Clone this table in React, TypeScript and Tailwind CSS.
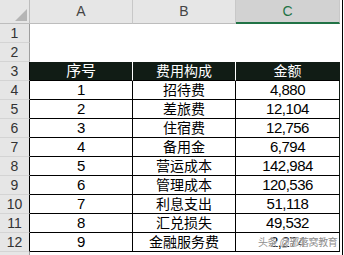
const rows: { n: number; a?: string; b?: string; c?: string; head?: boolean; purple?: boolean }[] = [
  { n: 1 },
  { n: 2 },
  { n: 3, a: '序号', b: '费用构成', c: '金额', head: true },
  { n: 4, a: '1', b: '招待费', c: '4,880' },
  { n: 5, a: '2', b: '差旅费', c: '12,104' },
  { n: 6, a: '3', b: '住宿费', c: '12,756' },
  { n: 7, a: '4', b: '备用金', c: '6,794', purple: true },
  { n: 8, a: '5', b: '营运成本', c: '142,984' },
  { n: 9, a: '6', b: '管理成本', c: '120,536' },
  { n: 10, a: '7', b: '利息支出', c: '51,118' },
  { n: 11, a: '8', b: '汇兑损失', c: '49,532' },
  { n: 12, a: '9', b: '金融服务费', c: '2,274' },
]

const font = { fontFamily: '"Liberation Sans", "Noto Sans CJK SC", sans-serif' }

function Row({ r }: { r: (typeof rows)[number] }) {
  const table = r.n >= 3
  const cell = r.head
    ? 'bg-[#111c15] text-white border-b border-b-black'
    : table
      ? 'bg-white text-black border-b border-b-black'
      : 'bg-white'
  return (
    <div className="flex h-[19px]">
      <div
        className={`w-[30px] shrink-0 flex items-center justify-center bg-[#e6e6e6] text-[14px] text-[#333] border-b border-b-[#d4d4d4] border-r ${
          table ? 'border-r-black' : 'border-r-[#9e9e9e]'
        }`}
      >
        {r.n}
      </div>
      <div
        className={`w-[103px] shrink-0 flex items-center justify-center text-[15px] tracking-[-0.3px] ${cell} ${
          r.head ? 'border-r border-r-white' : table ? 'border-r border-r-black' : ''
        } ${r.purple ? 'text-[#4e3391]' : ''}`}
      >
        {r.a}
      </div>
      <div
        className={`w-[103px] shrink-0 flex items-center justify-center text-[14px] ${cell} ${
          r.head ? 'border-r border-r-white' : table ? 'border-r border-r-black' : ''
        }`}
      >
        {r.b}
      </div>
      <div
        className={`w-[104px] shrink-0 flex items-center justify-center text-[15px] tracking-[-0.5px] ${cell} ${
          table ? 'border-r border-r-[#111c15]' : ''
        } ${r.purple ? 'text-[#3d2f7a]' : ''}`}
      >
        {r.head ? <span className="text-[14px] tracking-normal">{r.c}</span> : r.c}
      </div>
      <div className="flex-1 bg-white" />
    </div>
  )
}

export default function App() {
  return (
    <div className="relative w-[344px] h-[255px] overflow-hidden bg-white flex" style={font}>
      <div className="w-[342px] flex flex-col">
        <div className="flex h-[24px]">
          <div className="w-[30px] shrink-0 relative bg-[#e6e6e6] border-b border-b-[#bdbdbd] border-r border-r-[#bdbdbd]">
            <svg width="12" height="12" viewBox="0 0 12 12" className="absolute left-[15px] top-[9px]">
              <polygon points="12,0 12,12 0,12" fill="#b5b5b5" />
            </svg>
          </div>
          <div className="w-[103px] shrink-0 flex items-center justify-center bg-[#e6e6e6] text-[14px] text-[#444] border-b border-b-[#bdbdbd] border-r border-r-[#c8c8c8]">
            A
          </div>
          <div className="w-[103px] shrink-0 flex items-center justify-center bg-[#e6e6e6] text-[14px] text-[#444] border-b border-b-[#bdbdbd] border-r border-r-[#c8c8c8]">
            B
          </div>
          <div className="w-[104px] shrink-0 flex items-center justify-center bg-[#d2d2d2] text-[14px] text-[#217346] border-b-2 border-b-[#217346] border-r border-r-[#c8c8c8]">
            C
          </div>
          <div className="flex-1 bg-white" />
        </div>
        {rows.map((r) => (
          <Row key={r.n} r={r} />
        ))}
        <div className="flex flex-1">
          <div className="w-[30px] bg-[#e6e6e6] border-r border-r-[#9e9e9e]" />
          <div className="flex-1 bg-white" />
        </div>
      </div>
      <div className="w-[1px] bg-black" />
      <div className="w-[1px] bg-white" />
      <div
        className="absolute left-[258px] top-[237px] text-[10px] leading-[12px] tracking-[-0.4px] text-[#8f8f8f] whitespace-nowrap"
        style={{ textShadow: '0 0 2px #fff, 0 0 1px #fff' }}
      >
        头条 @部落窝教育
      </div>
    </div>
  )
}
